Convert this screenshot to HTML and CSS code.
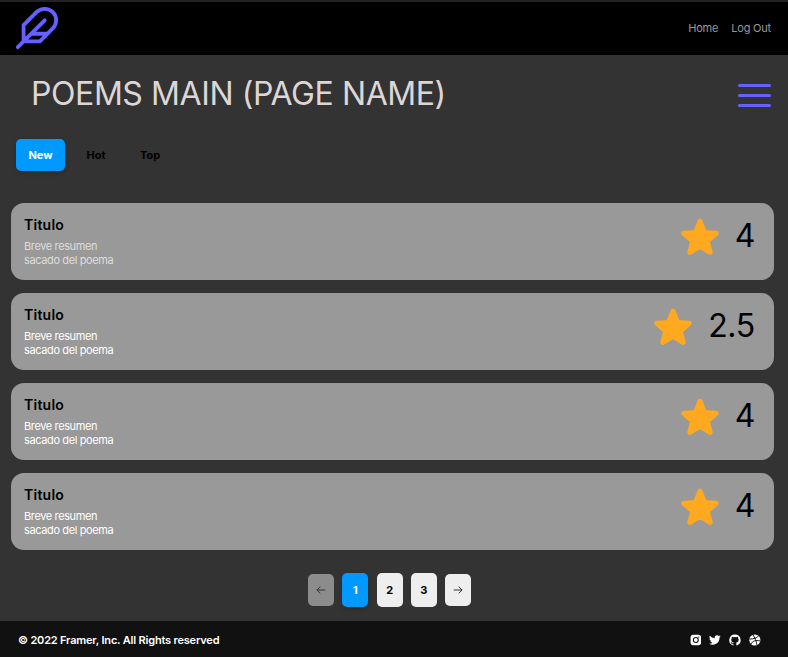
FILE: index.html
```html
<!DOCTYPE html>
<html lang="es">
<head>
<meta charset="utf-8">
<title>Poems</title>
<link rel="stylesheet" href="styles.css">
</head>
<body>
<svg class="defs" aria-hidden="true">
  <symbol id="star" viewBox="0 0 38 38"><path d="M19 3.2 23.5 14.5 35.2 15.3 26.3 23.1 29.2 34.4 19 28.3 8.8 34.4 11.7 23.1 2.8 15.3 14.5 14.5Z"/></symbol>
</svg>
<header class="nav">
  <svg class="logo" viewBox="0 0 24 24"><path d="M20.24 12.24a6 6 0 0 0-8.49-8.49L5 10.5V19h8.5zM16 8 2 22M17.5 15H9"/></svg>
  <nav class="links"><a>Home</a><a>Log Out</a></nav>
</header>
<main>
  <div class="heading">
    <h1>POEMS MAIN (PAGE NAME)</h1>
    <div class="menu"><span></span><span></span><span></span></div>
  </div>
  <div class="tabs"><span class="tab active">New</span><span class="tab hot">Hot</span><span class="tab">Top</span></div>
  <section class="cards">
    <article class="card muted">
      <div class="copy"><h2>Titulo</h2><p>Breve resumen<br>sacado del poema</p></div>
      <div class="rating"><svg class="star"><use href="#star"/></svg><span>4</span></div>
    </article>
    <article class="card">
      <div class="copy"><h2>Titulo</h2><p>Breve resumen<br>sacado del poema</p></div>
      <div class="rating"><svg class="star"><use href="#star"/></svg><span>2.5</span></div>
    </article>
    <article class="card">
      <div class="copy"><h2>Titulo</h2><p>Breve resumen<br>sacado del poema</p></div>
      <div class="rating"><svg class="star"><use href="#star"/></svg><span>4</span></div>
    </article>
    <article class="card">
      <div class="copy"><h2>Titulo</h2><p>Breve resumen<br>sacado del poema</p></div>
      <div class="rating low"><svg class="star"><use href="#star"/></svg><span>4</span></div>
    </article>
  </section>
  <div class="pages">
    <span class="page arrow disabled"><svg viewBox="0 0 10 10"><path d="M9.3 5H.9M4.3 1.6.9 5l3.4 3.4"/></svg></span>
    <span class="page current">1</span>
    <span class="page">2</span>
    <span class="page">3</span>
    <span class="page arrow"><svg viewBox="0 0 10 10"><path d="M.7 5h8.4M5.7 1.6 9.1 5 5.7 8.4"/></svg></span>
  </div>
</main>
<footer>
  <span class="copyright">© 2022 Framer, Inc. All Rights reserved</span>
  <div class="social">
    <svg viewBox="0 0 12 12"><rect x=".6" y=".6" width="10.8" height="10.8" rx="2.8" fill="#fff"/><circle cx="6" cy="6" r="2.5" fill="none" stroke="#111" stroke-width="1.1"/><circle cx="9" cy="3" r=".7" fill="#111"/></svg>
    <svg viewBox="0 0 24 24"><path fill="#fff" d="M24 4.6a10 10 0 0 1-2.8.8 5 5 0 0 0 2.1-2.7 10 10 0 0 1-3.1 1.2 4.9 4.9 0 0 0-8.4 4.5A14 14 0 0 1 1.7 3.1a4.9 4.9 0 0 0 1.5 6.6 4.9 4.9 0 0 1-2.2-.6 4.9 4.9 0 0 0 3.9 4.9 5 5 0 0 1-2.2.1 4.9 4.9 0 0 0 4.6 3.4A9.9 9.9 0 0 1 0 19.5 14 14 0 0 0 21.5 7.1 10 10 0 0 0 24 4.6z"/></svg>
    <svg viewBox="0 0 24 24"><path fill="#fff" d="M12 .8a11.5 11.5 0 0 0-3.6 22.4c.6.1.8-.2.8-.5v-2.2c-3.3.7-4-1.4-4-1.4-.5-1.3-1.3-1.7-1.3-1.7-1-.7.1-.7.1-.7 1.2.1 1.8 1.2 1.8 1.2 1 1.8 2.8 1.3 3.4 1 .1-.8.4-1.3.8-1.6-2.7-.3-5.4-1.3-5.4-5.8 0-1.2.4-2.3 1.2-3.1-.1-.3-.5-1.5.1-3.1 0 0 1-.3 3.3 1.2a11.5 11.5 0 0 1 6 0C17.5 5 18.5 5.3 18.5 5.3c.6 1.6.2 2.8.1 3.1.8.8 1.2 1.9 1.2 3.1 0 4.5-2.8 5.5-5.4 5.8.4.4.8 1.1.8 2.2v3.2c0 .3.2.6.8.5A11.5 11.5 0 0 0 12 .8z"/></svg>
    <svg viewBox="0 0 24 24"><circle cx="12" cy="12" r="11.5" fill="#fff"/><path fill="none" stroke="#111" stroke-width="2" d="M8 1c4 6 7 13 8.5 22M1 10c8 0 15-1 18.5-6.5M4 20.5C7 14 14 11.5 23 14"/></svg>
  </div>
</footer>
</body>
</html>
```
FILE: styles.css
```css
* { box-sizing: border-box; }
body { margin: 0; width: 788px; height: 657px; overflow: hidden; background: #333; font-family: Inter, sans-serif; display: flex; flex-direction: column; }
h1, h2, p { margin: 0; }
.defs { position: absolute; width: 0; height: 0; }
.nav { height: 55px; flex: none; background: #000; border-top: 2px solid #222; display: flex; justify-content: space-between; padding: 3px 17px 0 14px; }
.logo { width: 46px; height: 46px; fill: none; stroke: #6560ff; stroke-width: 2; stroke-linecap: round; stroke-linejoin: round; }
.links { display: flex; gap: 13px; padding-top: 15px; font-size: 11px; line-height: 16px; letter-spacing: -.2px; color: #999; }
main { flex: 1; display: flex; flex-direction: column; }
.heading { height: 84px; display: flex; justify-content: space-between; padding: 18px 17px 0 31px; }
h1 { font-size: 32px; line-height: 42px; font-weight: 400; color: #ddd6d6; letter-spacing: -.42px; white-space: nowrap; }
.menu { width: 33px; padding-top: 11px; display: flex; flex-direction: column; gap: 6.5px; }
.menu span { height: 3.4px; background: #6560ff; border-radius: 2px; }
.tabs { height: 64px; padding-left: 16px; display: flex; font-size: 11px; font-weight: 700; line-height: 32px; }
.tab { width: 54px; height: 32px; text-align: center; }
.active { width: 49px; border-radius: 5px; background: #09f; color: #fff; box-shadow: 0 2px 5px rgba(0,0,0,.15); }
.hot { margin-left: 4px; }
.cards { padding: 0 14px 0 11px; display: flex; flex-direction: column; gap: 13px; }
.card { height: 77px; border-radius: 13px; background: #999; display: flex; justify-content: space-between; padding: 13px 19px 0 13px; }
h2 { font-size: 14px; line-height: 18px; font-weight: 600; letter-spacing: .25px; }
.copy p { margin-top: 6px; font-size: 11px; line-height: 13.5px; color: #fff; letter-spacing: -.38px; }
.muted p { color: #ddd; }
.rating { display: flex; gap: 16px; font-size: 32px; line-height: 39px; font-weight: 400; letter-spacing: -.3px; }
.low { line-height: 40px; }
.star { width: 38px; height: 38px; margin-top: 2px; fill: #ffa920; stroke: #ffa920; stroke-width: 5; stroke-linejoin: round; }
.pages { padding: 23px 0 0 308px; display: flex; align-items: center; gap: 8.3px; }
.page { width: 26px; height: 34px; border-radius: 5px; background: #eee; text-align: center; font-size: 11px; line-height: 34px; font-weight: 700; }
.arrow { height: 32px; display: flex; align-items: center; justify-content: center; }
.arrow svg { width: 10px; height: 10px; fill: none; stroke: #333; stroke-width: 1; }
.disabled { background: #8c8c8c; }
.current { background: #09f; color: #fff; box-shadow: 0 2px 5px rgba(0,0,0,.15); }
footer { height: 36px; flex: none; background: #111; display: flex; align-items: center; justify-content: space-between; padding: 2px 27.5px 0 18px; color: #fff; }
.copyright { font-size: 11px; font-weight: 600; letter-spacing: -.19px; }
.social { display: flex; gap: 8px; }
.social svg { width: 11.7px; height: 12px; }
```
